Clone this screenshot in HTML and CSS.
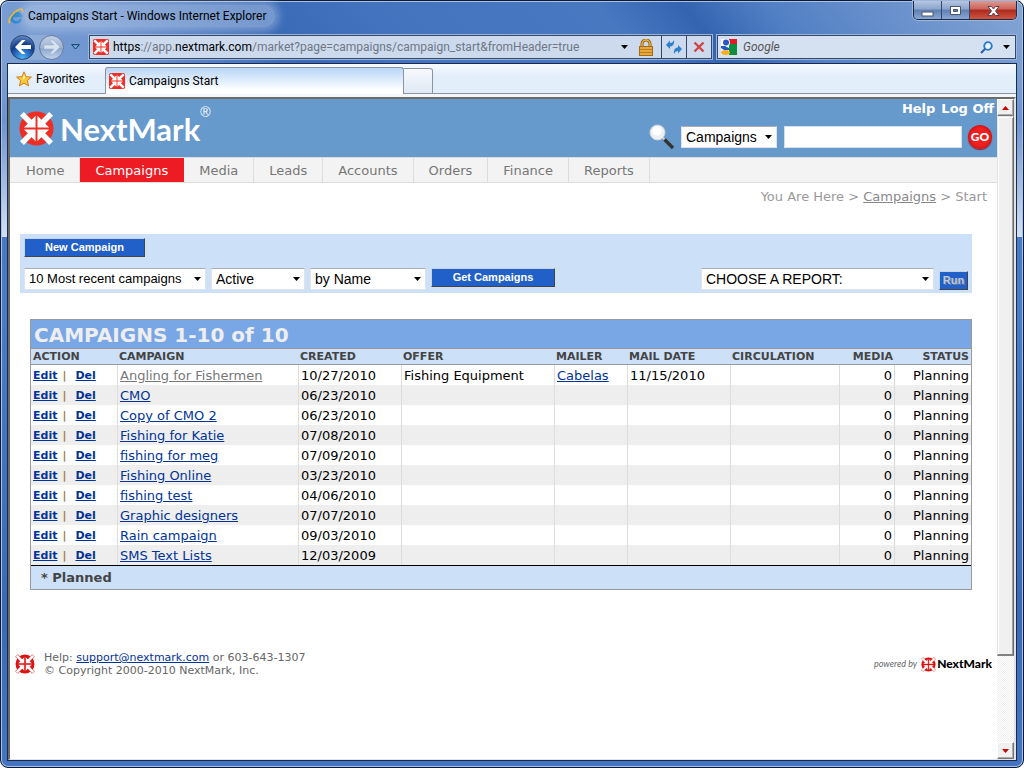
FILE: index.html
```html
<!DOCTYPE html>
<html lang="en">
<head>
<meta charset="utf-8">
<title>Campaigns Start</title>
<link rel="stylesheet" href="styles.css">
</head>
<body>
<svg class="defs" aria-hidden="true">
  <symbol id="arrows" viewBox="0 0 36 36">
    <path d="M17 17 17 5 13 9 5 1 1 5 9 13 5 17z"/>
    <path d="M19 19 19 31 23 27 31 35 35 31 27 23 31 19z"/>
    <path d="M19 17 19 5 23 9 31 1 35 5 27 13 31 17z"/>
    <path d="M17 19 17 31 13 27 5 35 1 31 9 23 5 19z"/>
  </symbol>
  <symbol id="favicon" viewBox="0 0 36 36">
    <rect width="36" height="36" rx="4" fill="#ee2e24"/>
    <use href="#arrows" width="36" height="36" fill="#fff"/>
  </symbol>
  <symbol id="mark" viewBox="0 0 36 36">
    <circle cx="18" cy="18" r="17" fill="#e01010"/>
    <use href="#arrows" width="36" height="36" fill="#fff" stroke="#e01010" stroke-width="1"/>
  </symbol>
</svg>
<div class="window">
  <header class="titlebar">
    <svg class="ie" viewBox="0 0 18 18" aria-hidden="true">
      <path d="M14.500 12A5.300 5.300 0 1 1 14.300 8.800H5" fill="none" stroke="#2a87d0" stroke-width="3"/>
      <path d="M2 17C-1 14 5 5 12 2c4-2 5 0 4 3" fill="none" stroke="#f2b92c" stroke-width="1.800"/>
    </svg>
    <span class="caption">Campaigns Start - Windows Internet Explorer</span>
    <div class="winbuttons">
      <button class="winbtn" aria-label="Minimize"><svg width="13" height="13" viewBox="0 0 13 13"><rect x="1" y="8" width="11" height="4" fill="#fff" stroke="#4b5568"/></svg></button>
      <button class="winbtn" aria-label="Maximize"><svg width="13" height="13" viewBox="0 0 13 13"><path d="M1.500 2.500h10v8h-10zM4.500 5.500h4v2h-4z" fill="#fff" fill-rule="evenodd" stroke="#4b5568"/></svg></button>
      <button class="winbtn winclose" aria-label="Close"><svg width="13" height="13" viewBox="0 0 13 13"><path d="M1 2.500h3.500L6.500 5l2-2.500H12L8.500 7l3.500 4.500H8.500l-2-2.500-2 2.500H1L4.500 7z" fill="#fff" stroke="#5a4048"/></svg></button>
    </div>
  </header>

  <div class="addressrow">
    <div class="navpill">
      <button class="round back" aria-label="Back"><svg width="24" height="24" viewBox="0 0 24 24"><path d="M4 12l7-7h3.500l-4.500 5H20v4H10l4.500 5H11z" fill="#fff"/></svg></button>
      <button class="round fwd" aria-label="Forward"><svg width="24" height="24" viewBox="0 0 24 24"><path d="M20 12l-7-7H9.500l4.500 5H4v4h10l-4.500 5H13z" fill="#d8e3f0" stroke="#9fb4cd" stroke-width=".6"/></svg></button>
    </div>
    <button class="plain" aria-label="Recent pages"><svg width="9" height="6" viewBox="0 0 9 6"><path d="M.7.7h7.600L4.500 5z" fill="#6db4e8" stroke="#14355f"/></svg></button>
    <div class="urlbar">
      <div class="urlfield">
        <svg class="fav" aria-hidden="true"><use href="#favicon"/></svg>
        <span class="url"><b>https</b>://app.<b>nextmark.com</b>/market?page=campaigns/campaign_start&amp;fromHeader=true</span>
        <svg width="7" height="4" viewBox="0 0 7 4"><path d="M0 0h7L3.500 4z"/></svg>
        <svg width="14" height="17" viewBox="0 0 14 17" class="lock"><path d="M3 8V5a4 4 0 0 1 8 0v3" fill="none" stroke="#8a5a10" stroke-width="3"/><path d="M3 8V5a4 4 0 0 1 8 0v3" fill="none" stroke="#eeb64a" stroke-width="1.400"/><rect x=".5" y="7.500" width="13" height="9" fill="#e9a83a" stroke="#a06a18"/><path d="M1 10.500h12M1 13.500h12" stroke="#b87c20"/></svg>
      </div>
      <button class="urlbtn" aria-label="Refresh"><svg width="16" height="16" viewBox="0 0 16 16"><path d="M0 6l4-4.500V4c2 0 3-1 4-3 .5 4-1 6.500-4 6.500V10z" fill="#2f80cc"/><path d="M16 10l-4 4.500V12c-2 0-3 1-4 3-.5-4 1-6.500 4-6.500V6z" fill="#2f80cc"/></svg></button>
      <button class="urlbtn" aria-label="Stop"><svg width="12" height="12" viewBox="0 0 12 12"><path d="M1.500 1.500l9 9M10.500 1.500l-9 9" stroke="#d04545" stroke-width="2.400"/></svg></button>
    </div>
    <div class="searchbar">
      <svg width="16" height="16" viewBox="0 0 16 16" aria-hidden="true"><path d="M0 0h16v16H0z" fill="#fff"/><path d="M8 0h8v5H8z" fill="#e01b22"/><path d="M8 5h8v11H8z" fill="#0c8f3c"/><circle cx="5" cy="3.500" r="4" fill="#fff"/><circle cx="5" cy="3.500" r="3" fill="#2858c8"/><path d="M0 7h4l4 2v2H3L0 9z" fill="#2858c8"/><ellipse cx="4.500" cy="13.500" rx="4.500" ry="2.500" fill="#f5b021"/></svg>
      <input class="searchinput" type="text" placeholder="Google" aria-label="Search Google">
      <svg width="13" height="13" viewBox="0 0 13 13" aria-hidden="true"><circle cx="8" cy="5" r="3.800" fill="#e8f2fb" stroke="#2b78c8" stroke-width="1.800"/><path d="M5.200 7.800L1 12" stroke="#2560a8" stroke-width="2"/></svg>
      <svg width="7" height="4" viewBox="0 0 7 4" class="searcharrow" aria-hidden="true"><path d="M0 0h7L3.500 4z"/></svg>
    </div>
  </div>

  <div class="client">
    <div class="tabrow">
      <button class="favorites"><svg width="16" height="16" viewBox="0 0 16 16"><path d="M8 .8l2.100 4.900 5.300.4-4 3.500 1.200 5.300L8 12.200l-4.600 2.700 1.200-5.300-4-3.500 5.300-.4z" fill="#fcc53a" stroke="#cf8312"/><path d="M8 3l1.400 3.400-3 3z" fill="#fff0b0"/></svg>Favorites</button>
      <button class="tab"><svg class="fav" aria-hidden="true"><use href="#favicon"/></svg>Campaigns Start</button>
      <button class="newtab" aria-label="New tab"></button>
    </div>
    <div class="viewport">
      <div class="page">
        <div class="masthead">
          <div class="brand">
            <svg class="brandmark" viewBox="0 0 36 36" aria-hidden="true"><circle cx="18" cy="18" r="17.500" fill="#ee2e24"/><use href="#arrows" width="36" height="36" fill="#fff"/></svg>
            <span class="brandname">NextMark</span><span class="reg">®</span>
          </div>
          <div class="tools">
            <div class="links"><a href="#">Help</a> <a href="#">Log Off</a></div>
            <form class="find">
              <svg width="26" height="26" viewBox="0 0 26 26" aria-hidden="true"><path d="M13 13l3 3" stroke="#ccc" stroke-width="2"/><path d="M15.500 15.500L24 24" stroke="#333" stroke-width="3.400"/><circle cx="8.500" cy="8.500" r="7.500" fill="#eef1f3" stroke="#d2d6d8"/><circle cx="8" cy="7" r="4.500" fill="#fff"/></svg>
              <select class="sel scope" aria-label="Search in"><option>Campaigns</option></select>
              <input class="term" type="text" aria-label="Search term">
              <button class="go" type="button">GO</button>
            </form>
          </div>
        </div>
        <nav class="menu">
          <a href="#">Home</a><a class="on" href="#">Campaigns</a><a href="#">Media</a><a href="#">Leads</a><a href="#">Accounts</a><a href="#">Orders</a><a href="#">Finance</a><a href="#">Reports</a>
        </nav>
        <div class="crumbs">You Are Here &gt; <a href="#">Campaigns</a> &gt; Start</div>

        <form class="filters">
          <button class="btn wide" type="button">New Campaign</button>
          <div class="filterrow">
            <select class="sel recent" aria-label="Which campaigns"><option>10 Most recent campaigns</option></select>
            <select class="sel state" aria-label="State"><option>Active</option></select>
            <select class="sel order" aria-label="Sort"><option>by Name</option></select>
            <button class="btn get" type="button">Get Campaigns</button>
            <select class="sel report" aria-label="Report"><option>CHOOSE A REPORT:</option></select>
            <button class="btn run" type="button" disabled>Run</button>
          </div>
        </form>

        <section class="list">
          <h1 class="listtitle">CAMPAIGNS 1-10 of 10</h1>
          <table class="grid">
            <colgroup><col class="c-action"><col class="c-name"><col class="c-date"><col class="c-offer"><col class="c-mailer"><col class="c-date"><col class="c-circ"><col class="c-media"><col></colgroup>
            <thead><tr><th>ACTION</th><th>CAMPAIGN</th><th>CREATED</th><th>OFFER</th><th>MAILER</th><th>MAIL DATE</th><th>CIRCULATION</th><th class="num">MEDIA</th><th class="num">STATUS</th></tr></thead>
            <tbody>
              <tr><td class="act"><a href="#">Edit</a><i>|</i><a href="#">Del</a></td><td><a class="seen" href="#">Angling for Fishermen</a></td><td>10/27/2010</td><td>Fishing Equipment</td><td><a href="#">Cabelas</a></td><td>11/15/2010</td><td></td><td class="num">0</td><td class="num">Planning</td></tr>
              <tr><td class="act"><a href="#">Edit</a><i>|</i><a href="#">Del</a></td><td><a href="#">CMO</a></td><td>06/23/2010</td><td></td><td></td><td></td><td></td><td class="num">0</td><td class="num">Planning</td></tr>
              <tr><td class="act"><a href="#">Edit</a><i>|</i><a href="#">Del</a></td><td><a href="#">Copy of CMO 2</a></td><td>06/23/2010</td><td></td><td></td><td></td><td></td><td class="num">0</td><td class="num">Planning</td></tr>
              <tr><td class="act"><a href="#">Edit</a><i>|</i><a href="#">Del</a></td><td><a href="#">Fishing for Katie</a></td><td>07/08/2010</td><td></td><td></td><td></td><td></td><td class="num">0</td><td class="num">Planning</td></tr>
              <tr><td class="act"><a href="#">Edit</a><i>|</i><a href="#">Del</a></td><td><a href="#">fishing for meg</a></td><td>07/09/2010</td><td></td><td></td><td></td><td></td><td class="num">0</td><td class="num">Planning</td></tr>
              <tr><td class="act"><a href="#">Edit</a><i>|</i><a href="#">Del</a></td><td><a href="#">Fishing Online</a></td><td>03/23/2010</td><td></td><td></td><td></td><td></td><td class="num">0</td><td class="num">Planning</td></tr>
              <tr><td class="act"><a href="#">Edit</a><i>|</i><a href="#">Del</a></td><td><a href="#">fishing test</a></td><td>04/06/2010</td><td></td><td></td><td></td><td></td><td class="num">0</td><td class="num">Planning</td></tr>
              <tr><td class="act"><a href="#">Edit</a><i>|</i><a href="#">Del</a></td><td><a href="#">Graphic designers</a></td><td>07/07/2010</td><td></td><td></td><td></td><td></td><td class="num">0</td><td class="num">Planning</td></tr>
              <tr><td class="act"><a href="#">Edit</a><i>|</i><a href="#">Del</a></td><td><a href="#">Rain campaign</a></td><td>09/03/2010</td><td></td><td></td><td></td><td></td><td class="num">0</td><td class="num">Planning</td></tr>
              <tr><td class="act"><a href="#">Edit</a><i>|</i><a href="#">Del</a></td><td><a href="#">SMS Text Lists</a></td><td>12/03/2009</td><td></td><td></td><td></td><td></td><td class="num">0</td><td class="num">Planning</td></tr>
            </tbody>
          </table>
          <div class="legend">* Planned</div>
        </section>

        <footer class="foot">
          <svg class="footmark" aria-hidden="true"><use href="#mark"/></svg>
          <div class="contact">Help: <a href="#">support@nextmark.com</a> or 603-643-1307<br>© Copyright 2000-2010 NextMark, Inc.</div>
          <div class="powered"><em>powered by</em><svg class="minimark" aria-hidden="true"><use href="#mark"/></svg><b>NextMark</b></div>
        </footer>
      </div>
      <div class="scrollbar">
        <button class="scrollbtn" aria-label="Scroll up"><svg width="7" height="4" viewBox="0 0 7 4"><path d="M0 4h7L3.500 0z" fill="#c00"/></svg></button>
        <div class="thumb"></div>
        <div class="track"></div>
        <button class="scrollbtn" aria-label="Scroll down"><svg width="7" height="4" viewBox="0 0 7 4"><path d="M0 0h7L3.500 4z" fill="#c00"/></svg></button>
      </div>
    </div>
  </div>
</div>
</body>
</html>
```
FILE: styles.css
```css
* { box-sizing: border-box; }
body {
  margin: 0;
  background: #fff;
  font: 13px/16px "DejaVu Sans", Verdana, sans-serif;
}
button, input, select { margin: 0; padding: 0; border: 0; border-radius: 0; color: inherit; font: inherit; }
button { display: flex; align-items: center; justify-content: center; background: none; }
svg { display: block; flex: none; }
.defs { position: absolute; width: 0; height: 0; }

/* Window frame */
.window {
  display: flex;
  flex-direction: column;
  min-height: 100vh;
  padding: 1px 6px 6px;
  border: 1px solid #0e1a33;
  border-radius: 8px;
  background:
    linear-gradient(50deg, rgba(125, 160, 212, .9) 0, #6d94d0 12%, #3a6ab6 28%, #4474be 40%, #4878c0 60%, #3464b0 68%, #5280c5 76%, #85a5d4 100%) 0 0 / 100% 62px no-repeat,
    linear-gradient(#7f9fd0 60px, #6d93cf 120px, #d3e0f2) 0 0 / 100% 236px no-repeat,
    linear-gradient(#3c6cba, #4a7cc8 40%, #3b69b5 80%, #4575c2);
  box-shadow: inset 0 0 0 1px #a9c3e8;
}

/* Title bar */
.titlebar { display: flex; align-items: center; height: 29px; gap: 4px; padding-bottom: 2px; font: 12px/16px Roboto, sans-serif; }
.ie { width: 16px; height: 16px; margin-left: 1px; }
.caption { padding: 3px 8px 3px 4px; margin: 0 auto 0 -4px; border-radius: 10px; background: rgba(190, 208, 236, .45); box-shadow: 0 0 8px 4px rgba(190, 208, 236, .45); white-space: nowrap; }
.winbuttons { display: flex; align-self: flex-start; margin-top: -1px; border: 1px solid #1c2a48; border-top: 0; border-radius: 0 0 5px 5px; overflow: hidden; box-shadow: 0 0 0 1px #9db6dc; }
.winbtn { width: 28px; height: 18px; border-right: 1px solid #33486f; background: linear-gradient(#b5c6e0, #8ba5ce 45%, #5f7fb2 50%, #8ba8d4); }
.winclose { width: 46px; border-right: 0; background: linear-gradient(#dc9a92, #cc6258 45%, #ac2a20 50%, #d0563f); }

/* Address row */
.addressrow { display: flex; align-items: center; height: 32px; gap: 5px; padding-right: 1px; font: 12px/16px Roboto, sans-serif; }
.navpill { display: flex; gap: 4px; margin-left: 3px; border-radius: 13px; background: #8eacd8; }
.round { width: 25px; height: 25px; border: 1px solid #28436f; border-radius: 50%; }
.back { background: radial-gradient(circle at 50% 95%, #4bb4f4, #1b50a8 45%, #123a86 55%, #7ea2d6); }
.fwd { border-color: #64799b; background: linear-gradient(#c3d1e6, #9db3d4 50%, #8aa4cc 52%, #c2d3ec); }
.plain { width: 12px; height: 16px; }
.urlbar { display: flex; flex: 1; height: 24px; margin-left: 3px; border: 1px solid #33486b; outline: 1px solid #9bb4da; background: #cddaee; }
.urlfield { display: flex; flex: 1; align-items: center; gap: 4px; min-width: 0; padding: 0 8px 0 3px; }
.fav { width: 16px; height: 16px; }
.url { flex: 1; color: #6f7785; white-space: nowrap; }
.url b { color: #000; font-weight: 400; }
.lock { margin-left: 7px; }
.urlbtn { width: 25px; border-left: 1px solid #33486b; }
.searchbar { display: flex; align-items: center; width: 299px; height: 24px; gap: 6px; padding: 0 5px 0 3px; border: 1px solid #33486b; outline: 1px solid #9bb4da; background: #d5e0f0; }
.searchinput { flex: 1; min-width: 0; background: none; font-style: italic; }
.searchinput::placeholder { color: #555; opacity: 1; }
.searcharrow { margin-left: 4px; }

/* Client area */
.client { display: flex; flex: 1; flex-direction: column; border: 1px solid #172b50; background: #fff; }
.tabrow { display: flex; height: 33px; border-bottom: 3px solid #f3f6fa; background: linear-gradient(#f7fafe, #e3eefb 40%, #e3eefb); font: 12px/16px Roboto, sans-serif; box-shadow: inset 0 -1px 0 #8a93a2; }
.favorites { width: 97px; gap: 4px; padding: 0 12px 1px 0; white-space: nowrap; }
.tab { width: 299px; gap: 4px; justify-content: flex-start; margin-top: 3px; padding-left: 3px; border: 1px solid #8a93a2; border-bottom: 0; border-radius: 3px 3px 0 0; background: linear-gradient(#b9d6f8, #fff 85%); }
.newtab { width: 29px; margin-top: 4px; border: 1px solid #8a93a2; border-left: 0; border-radius: 0 3px 0 0; background: linear-gradient(#f6f9fd, #dfe8f4); }
.viewport { display: flex; flex: 1; border: 2px solid #e3e3e3; border-bottom-width: 1px; border-top-color: #6e6a66; border-left-color: #6e6a66; }
.page { flex: 1; min-width: 0; background: #fff; }

/* Scroll bar */
.scrollbar { display: flex; flex-direction: column; width: 17px; background: #fff; }
.scrollbtn { height: 17px; border: 1px solid #fff; border-right-color: #777; border-bottom-color: #777; background: #f0f0f0; box-shadow: inset -1px -1px 0 #aaa; }
.thumb { flex: 539; border: 1px solid #e3e3e3; border-right-color: #696969; border-bottom: 2px solid #808080; background: #f0f0f0; box-shadow: inset 1px 1px 0 #fff, inset -1px 0 0 #a0a0a0; }
.track { flex: 86; background: repeating-conic-gradient(#eee 0 25%, #fff 0 50%) 0 0 / 2px 2px; }

/* Masthead */
.masthead { display: flex; justify-content: space-between; min-height: 58px; padding: 1px 5px 0 9px; background: #69c; color: #fff; }
.brand { display: flex; align-items: center; gap: 6px; }
.brandmark { width: 35px; height: 35px; }
.brandname { font: 700 31px/32px Lato, sans-serif; }
.reg { align-self: flex-start; margin: 5px 0 0 -6px; font: 14px/14px "Liberation Sans", Arial, sans-serif; }
.tools { display: flex; flex-direction: column; align-items: flex-end; gap: 7px; padding-top: 1px; }
.links { display: flex; gap: 6px; margin-right: -2px; font-weight: 700; }
.links a { color: #fff; text-decoration: none; }
.find { display: flex; align-items: center; gap: 6px; }
.term { width: 178px; height: 22px; padding: 0 4px; border: 1px solid #d5dfe8; background: #fff; color: #000; }
.go { width: 24px; height: 24px; border-radius: 50%; background: radial-gradient(circle, #f02020 50%, #d01010 75%); font: 900 12px/24px Lato, sans-serif; box-shadow: 0 1px 1px #8c2230; }
.sel {
  height: 22px;
  padding: 0 12px 0 4px;
  border: 1px solid #e2e3ea;
  border-top-color: #abadb3;
  appearance: none;
  background: #fff url("data:image/svg+xml,%3Csvg xmlns='http://www.w3.org/2000/svg' width='7' height='4'%3E%3Cpath d='M0 0h7L3.500 4z'/%3E%3C/svg%3E") right 4px center no-repeat;
  color: #000;
  font: 14px/18px "Liberation Sans", Arial, sans-serif;
}
.scope { width: 96px; margin-right: 1px; }

/* Menu and breadcrumb */
.menu { display: flex; height: 26px; padding-left: 1px; border: 1px solid #ddd; border-width: 1px 0; background: #f3f3f3; }
.menu a { padding: 5px 15px 3px; border-right: 1px solid #ddd; color: #777; text-decoration: none; }
.menu .on { border-color: #ed1c24; background: #ed1c24; color: #fff; }
.crumbs { padding: 6px 10px 0 0; color: #999; text-align: right; }
.crumbs a { color: #888; }

/* Filters */
.filters { margin: 29px 25px 0 10px; padding: 4px 4px 3px; background: #cce0f8; }
.btn { height: 19px; padding-bottom: 1px; border: 1px solid #c9d3df; border-right-color: #444; border-bottom-color: #444; background: #2060c8; color: #fff; font: 700 11px/16px "Liberation Sans", Arial, sans-serif; }
.wide { width: 121px; }
.filterrow { display: flex; align-items: center; gap: 5px; margin-top: 11px; }
.recent { width: 182px; font-size: 13px; }
.state { width: 94px; }
.order { width: 116px; }
.get { width: 124px; margin-bottom: 3px; }
.report { width: 233px; margin-left: auto; }
.run { width: 29px; margin-top: 2px; color: #bcc8dc; text-shadow: 1px 1px 0 #7080a0; }

/* Campaign list */
.list { margin: 26px 25px 0 20px; border: 1px solid #999; }
.listtitle { margin: 0; padding: 3px 3px 1px; background: #79a7e6; color: #eee; font-size: 20px; line-height: 24px; }
.grid { width: 100%; border-collapse: separate; border-spacing: 0; table-layout: fixed; border-bottom: 1px solid #000; }
.c-action { width: 87px; }
.c-name { width: 181px; }
.c-date { width: 103px; }
.c-offer { width: 153px; }
.c-mailer { width: 73px; }
.c-circ { width: 109px; }
.c-media { width: 55px; }
.grid th { height: 17px; padding: 1px 1px 0; border: 1px solid #999; border-width: 1px 0; background: #cce0f8; color: #444; font-size: 11px; line-height: 14px; text-align: left; white-space: nowrap; }
.grid th:first-child { padding-left: 2px; }
.grid td { height: 20px; padding: 2px 2px 0; border-right: 1px solid #ddd; line-height: 18px; white-space: nowrap; }
.grid td:last-child { border-right: 0; }
.grid .num { padding-right: 2px; text-align: right; }
.grid tbody tr:nth-child(even) { background: #eee; }
.grid a, .contact a { color: #039; }
.grid .seen { color: #777; }
.grid .act { font-size: 11px; font-weight: 700; }
.act i { margin: 0 9px 0 5px; color: #a67c3a; font-style: normal; }
.legend { padding: 4px 10px 3px; background: #cce0f8; color: #444; font-weight: 700; }

/* Footer */
.foot { display: flex; align-items: center; padding: 61px 5px 20px; color: #666; font-size: 11px; line-height: 13px; }
.footmark { width: 20px; height: 20px; margin-right: 9px; }
.powered { display: flex; align-items: center; margin-left: auto; color: #000; font: 12px/16px Lato, sans-serif; }
.powered em { margin-right: 4px; color: #666; font-size: 9px; }
.powered b { font-weight: 900; }
.minimark { width: 15px; height: 15px; margin-right: 1px; }
```
